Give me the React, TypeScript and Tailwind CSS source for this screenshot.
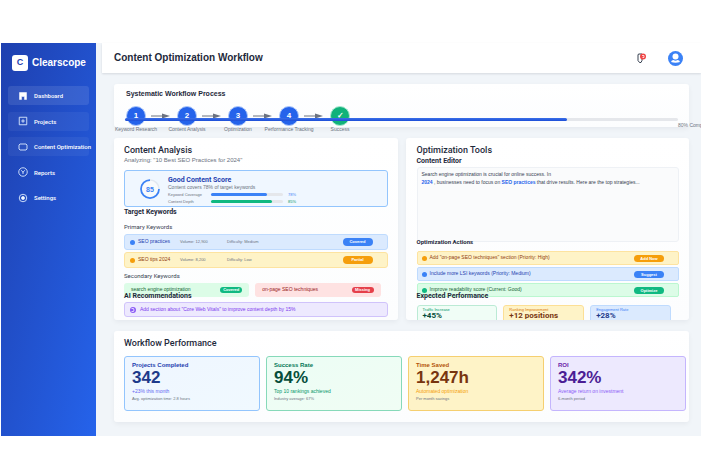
import { ReactNode } from "react";

const navItems = [
  { label: "Dashboard", icon: "home", style: "bg-white/10" },
  { label: "Projects", icon: "plus", style: "bg-white/5" },
  { label: "Content Optimization", icon: "content", style: "bg-white/5" },
  { label: "Reports", icon: "reports", style: "" },
  { label: "Settings", icon: "settings", style: "" },
];

const steps = [
  { mark: "1", label: "Keyword Research" },
  { mark: "2", label: "Content Analysis" },
  { mark: "3", label: "Optimization" },
  { mark: "4", label: "Performance Tracking" },
  { mark: "✓", label: "Success" },
];

const scoreBars = [
  { label: "Keyword Coverage", value: 78, fill: "bg-[#3b82f6]", text: "text-[#3b82f6]" },
  { label: "Content Depth", value: 85, fill: "bg-[#10b981]", text: "text-[#059669]" },
];

const primaryKeywords = [
  {
    name: "SEO practices",
    volume: "Volume: 12,900",
    difficulty: "Difficulty: Medium",
    status: "Covered",
    row: "border-[#bfdbfe] bg-[#dbeafe] text-[#1e40af]",
    color: "bg-[#3b82f6]",
  },
  {
    name: "SEO tips 2024",
    volume: "Volume: 8,200",
    difficulty: "Difficulty: Low",
    status: "Partial",
    row: "border-[#fde3a0] bg-[#fef3c7] text-[#92400e]",
    color: "bg-[#f59e0b]",
  },
];

const actions = [
  {
    text: 'Add "on-page SEO techniques" section (Priority: High)',
    button: "Add Now",
    row: "border-[#fde3a0] bg-[#fef3c7] text-[#92400e]",
    color: "bg-[#f59e0b]",
  },
  {
    text: "Include more LSI keywords (Priority: Medium)",
    button: "Suggest",
    row: "border-[#bfdbfe] bg-[#dbeafe] text-[#1e40af]",
    color: "bg-[#3b82f6]",
  },
  {
    text: "Improve readability score (Current: Good)",
    button: "Optimize",
    row: "border-[#bbf7d0] bg-[#dcfce7] text-[#166534]",
    color: "bg-[#10b981]",
  },
];

const expected = [
  { label: "Traffic Increase", value: "+45%", box: "border-[#bbead5] bg-[#f0fdf6]", labelColor: "text-[#059669]", valueColor: "text-[#064e3b]" },
  { label: "Ranking Improvement", value: "+12 positions", box: "border-[#fcdf95] bg-[#fef3c7]", labelColor: "text-[#d97706]", valueColor: "text-[#78350f]" },
  { label: "Engagement Rate", value: "+28%", box: "border-[#bfdbfe] bg-[#dbeafe]", labelColor: "text-[#3b82f6]", valueColor: "text-[#1e3a8a]" },
];

const stats = [
  {
    label: "Projects Completed",
    value: "342",
    note: "+23% this month",
    detail: "Avg. optimization time: 2.8 hours",
    box: "border-[#93c5fd] bg-linear-to-br from-[#eff6ff] to-[#f0f9ff]",
    labelColor: "text-[#1e40af]",
    valueColor: "text-[#1e3a8a]",
    noteColor: "text-[#6366f1]",
  },
  {
    label: "Success Rate",
    value: "94%",
    note: "Top 10 rankings achieved",
    detail: "Industry average: 67%",
    box: "border-[#86d9b9] bg-linear-to-br from-[#ecfdf5] to-[#f0fdf4]",
    labelColor: "text-[#047857]",
    valueColor: "text-[#064e3b]",
    noteColor: "text-[#059669]",
  },
  {
    label: "Time Saved",
    value: "1,247h",
    note: "Automated optimization",
    detail: "Per month savings",
    box: "border-[#f5cf70] bg-[#fef3c7]",
    labelColor: "text-[#b45309]",
    valueColor: "text-[#78350f]",
    noteColor: "text-[#f59e0b]",
  },
  {
    label: "ROI",
    value: "342%",
    note: "Average return on investment",
    detail: "6-month period",
    box: "border-[#c4b5fd] bg-[#ede9fe]",
    labelColor: "text-[#6b21a8]",
    valueColor: "text-[#4c1d95]",
    noteColor: "text-[#8b5cf6]",
  },
];

const NavIcon = ({ name }: { name: string }) => (
  <svg viewBox="0 0 20 20" className="size-[10px] shrink-0" fill="none" stroke="#dbeafe" strokeWidth="1.8">
    {name === "home" && <path d="M3 3h14v14h-4v-6H7v6H3z" fill="#fff" stroke="#fff" strokeWidth="1" />}
    {name === "plus" && <path d="M2.500 2.500h15v15h-15zM10 6.500v7M6.500 10h7" />}
    {name === "content" && <path d="M4 4h12l2 2v8l-2 2H4l-2-2V6z" />}
    {name === "reports" && (
      <>
        <circle cx="10" cy="10" r="8.500" />
        <path d="M6.500 6.500 10 10.500l3.500-4M10 10v4" />
      </>
    )}
    {name === "settings" && (
      <>
        <circle cx="10" cy="10" r="7.500" />
        <circle cx="10" cy="10" r="3" fill="#fff" />
      </>
    )}
  </svg>
);

const Card = ({ className, children }: { className: string; children: ReactNode }) => (
  <section className={`rounded-[3px] bg-linear-to-b from-white to-[#fcfdfe] shadow-[0_2px_5px_rgba(15,23,42,0.05)] ${className}`}>
    {children}
  </section>
);

const SubHeading = ({ children }: { children: ReactNode }) => (
  <h3 className="relative font-[Roboto] text-[7px] leading-[10px] font-bold text-[#1e293b]">{children}</h3>
);

const Dot = ({ color }: { color: string }) => <span className={`size-[5px] shrink-0 rounded-full ${color}`} />;

const Sidebar = () => (
  <aside className="ml-px w-[95px] shrink-0 bg-linear-to-br from-[#1e40af] to-[#2563eb] px-[7px]">
    <div className="flex h-[39px] items-center gap-1 pl-1">
      <span className="flex size-4 items-center justify-center rounded-[3px] bg-white text-[9px] font-bold text-[#1e40af]">C</span>
      <span className="text-[10px] font-bold text-white">Clearscope</span>
    </div>
    <nav className="mt-1 flex h-[121px] flex-col justify-between font-[Roboto]">
      {navItems.map((item) => (
        <a
          key={item.label}
          href="#"
          className={`flex h-[19px] items-center gap-[6px] rounded-[3px] pl-[10px] text-[6px] font-medium whitespace-nowrap text-white ${item.style}`}
        >
          <NavIcon name={item.icon} />
          {item.label}
        </a>
      ))}
    </nav>
  </aside>
);

const Header = () => (
  <header className="flex h-[30px] items-center justify-between bg-white pr-[18px] pl-3 shadow-[0_1px_2px_rgba(15,23,42,0.12)]">
    <h1 className="text-[10px] leading-3 font-bold text-[#1e293b]">Content Optimization Workflow</h1>
    <div className="flex items-center gap-5">
      <button aria-label="Notifications">
        <svg viewBox="0 0 26 26" className="size-[13px]">
          <path d="M7 4h7v13l-2 4H9l-3-4V6z" fill="#fff" stroke="#374151" strokeWidth="2" />
          <circle cx="16" cy="9" r="6" fill="#ef4444" />
          <path d="M14 7h4v4h-3" fill="none" stroke="#fff" strokeWidth="1.500" />
        </svg>
      </button>
      <button aria-label="Account">
        <svg viewBox="0 0 30 30" className="size-[15px]">
          <circle cx="15" cy="15" r="15" fill="#3b82f6" />
          <circle cx="15" cy="11" r="6" fill="#fff" />
          <path d="M6 22q1-4 5-4 4 3 8 0 4 0 5 4-9 3-18 0z" fill="#fff" />
        </svg>
      </button>
    </div>
  </header>
);

const Workflow = () => (
  <Card className="relative h-[43px] px-3 pt-[5px]">
    <h2 className="text-[7px] leading-[10px] font-bold text-[#1e293b]">Systematic Workflow Process</h2>
    <ol className="mt-[7px] flex">
      {steps.map((step, i) => (
        <li key={step.label} className="flex">
          <div className="flex w-5 flex-col items-center">
            <span
              className={`flex size-5 shrink-0 items-center justify-center rounded-full border text-[8px] leading-5 font-bold text-white ${
                i === 4 ? "border-[#a7e8cf] bg-[#10b27a]" : "border-[#a9c5fb] bg-[#2563eb]"
              }`}
            >
              {step.mark}
            </span>
            <span className="text-[5px] leading-[7px] whitespace-nowrap text-[#6b7280]">{step.label}</span>
          </div>
          {i < 4 && (
            <svg viewBox="0 0 31 20" className="h-5 w-[31px]">
              <path d="M5 10h13" stroke="#6b7280" strokeWidth="1" />
              <path d="M16 7.500l8 2.500-8 2.500z" fill="#6b7280" />
            </svg>
          )}
        </li>
      ))}
    </ol>
    <div className="absolute top-[34px] right-[11px] left-[11px] h-[3px] rounded-full bg-[#e5e7eb]">
      <div className="h-full w-4/5 rounded-full bg-linear-to-b from-[#3b6fe8] to-[#1d4ed8]" />
      <span className="absolute top-1 left-full text-[5px] leading-[7px] whitespace-nowrap text-[#6b7280]">80% Complete</span>
    </div>
  </Card>
);

const ContentAnalysis = () => (
  <Card className="h-[182px] px-[10px] pt-[6px]">
    <h2 className="font-[Roboto] text-[9px] leading-3 font-medium text-[#1e293b]">Content Analysis</h2>
    <p className="text-[6px] leading-2 text-[#6b7280]">Analyzing: "10 Best SEO Practices for 2024"</p>

    <div className="mt-[6px] flex h-[37px] items-center gap-2 rounded-[3px] border border-[#93c5fd] bg-[#f0f7ff] pl-[15px]">
      <svg viewBox="0 0 40 40" className="size-5 shrink-0">
        <circle cx="20" cy="20" r="18" fill="#f8fafc" stroke="#e2e8f0" strokeWidth="3" />
        <path d="M38 20a18 18 0 1 1-18-18" fill="none" stroke="#3b82f6" strokeWidth="3.500" />
        <text x="20" y="25" textAnchor="middle" fontSize="14" fontWeight="700" fill="#3b82f6">85</text>
      </svg>
      <div className="pt-1">
        <h3 className="font-[Roboto] text-[7px] leading-2 font-bold text-[#1e40af]">Good Content Score</h3>
        <p className="text-[5px] leading-[7px] text-[#6b7280]">Content covers 78% of target keywords</p>
        {scoreBars.map((bar) => (
          <div key={bar.label} className="flex h-[7px] items-center text-[4px] leading-[5px] text-[#6b7280]">
            <span className="w-[43px]">{bar.label}</span>
            <span className="h-[3px] w-[72px] rounded-full bg-[#e5e7eb]">
              <span className={`block h-full rounded-full ${bar.fill}`} style={{ width: `${bar.value}%` }} />
            </span>
            <span className={`ml-[5px] ${bar.text}`}>{bar.value}%</span>
          </div>
        ))}
      </div>
    </div>

    <SubHeading>Target Keywords</SubHeading>
    <h4 className="mt-[6px] font-[Roboto] text-[6px] leading-2 text-[#374151]">Primary Keywords</h4>
    <ul className="mt-[3px] flex flex-col gap-[2px]">
      {primaryKeywords.map((k) => (
        <li key={k.name} className={`flex h-4 items-center rounded-[3px] border pr-[14px] pl-[5px] ${k.row}`}>
          <Dot color={k.color} />
          <span className="ml-[3px] w-[42px] text-[5px]">{k.name}</span>
          <span className="w-[47px] text-[4px] text-[#6b7280]">{k.volume}</span>
          <span className="text-[4px] text-[#6b7280]">{k.difficulty}</span>
          <span className={`ml-auto w-[30px] rounded-full text-center text-[4px] leading-2 font-bold text-white ${k.color}`}>
            {k.status}
          </span>
        </li>
      ))}
    </ul>
    <h4 className="mt-1 font-[Roboto] text-[6px] leading-2 text-[#374151]">Secondary Keywords</h4>
    <div className="mt-[3px] flex h-2 gap-[6px] pr-[7px] text-[5px]">
      <div className="flex h-[14px] flex-1 items-center justify-between rounded-[3px] bg-[#dcfce7] px-[7px] text-[#166534]">
        search engine optimization
        <span className="w-[22px] rounded-full bg-[#10b981] text-center text-[4px] leading-[6px] font-bold text-white">Covered</span>
      </div>
      <div className="flex h-[14px] flex-1 items-center justify-between rounded-[3px] bg-[#fee2e2] px-[7px] text-[#991b1b]">
        on-page SEO techniques
        <span className="w-[22px] rounded-full bg-[#e5404a] text-center text-[4px] leading-[6px] font-bold text-white">Missing</span>
      </div>
    </div>
    <SubHeading>AI Recommendations</SubHeading>
    <div className="mt-px flex h-[15px] items-center gap-1 rounded-[3px] border border-[#d0c3fb] bg-[#ede9fe] pl-[5px] text-[5px] text-[#7c3aed]">
      <svg viewBox="0 0 12 12" className="size-[6px] shrink-0">
        <circle cx="6" cy="6" r="6" fill="#8b5cf6" />
        <path d="M3 3h4l1 3-1 3H3" fill="none" stroke="#fff" strokeWidth="1.500" />
      </svg>
      Add section about "Core Web Vitals" to improve content depth by 15%
    </div>
  </Card>
);

const OptimizationTools = () => (
  <Card className="h-[182px] overflow-hidden pt-[6px] pr-[10px] pl-[11px]">
    <h2 className="font-[Roboto] text-[9px] leading-3 font-medium text-[#1e293b]">Optimization Tools</h2>
    <SubHeading>Content Editor</SubHeading>
    <div className="mt-px h-[70px] text-[5px] leading-2 text-[#374151]">
      <div className="h-[75px] rounded-[3px] border border-[#eef1f5] bg-[#fafbfc] px-1 pt-[2px]">
        Search engine optimization is crucial for online success. In
        <br />
        <span className="font-bold text-[#2563eb]">2024</span> , businesses need to focus on{" "}
        <span className="font-bold text-[#2563eb]">SEO practices</span> that drive results. Here are the top strategies...
      </div>
    </div>
    <h3 className="relative font-[Roboto] text-[6px] leading-[10px] font-bold text-[#1e293b]">Optimization Actions</h3>
    <div className="mt-1 flex h-10 flex-col gap-[2px]">
      {actions.map((a) => (
        <div key={a.button} className={`flex h-[14px] shrink-0 items-center rounded-[2px] border pr-[14px] pl-1 text-[5px] ${a.row}`}>
          <Dot color={a.color} />
          <span className="ml-[3px]">{a.text}</span>
          <button className={`ml-auto w-[30px] rounded-full text-center text-[4px] leading-[7px] font-bold text-white ${a.color}`}>
            {a.button}
          </button>
        </div>
      ))}
    </div>
    <SubHeading>Expected Performance</SubHeading>
    <div className="mt-1 grid grid-cols-3 gap-[6px] pr-2">
      {expected.map((e) => (
        <div key={e.label} className={`h-5 rounded-[3px] border px-[5px] pt-px ${e.box}`}>
          <p className={`text-[4px] leading-[5px] ${e.labelColor}`}>{e.label}</p>
          <p className={`font-[Roboto] text-[8px] leading-2 font-bold ${e.valueColor}`}>{e.value}</p>
        </div>
      ))}
    </div>
  </Card>
);

const Performance = () => (
  <Card className="pt-[6px] pr-[3px] pb-[11px] pl-[10px]">
    <h2 className="font-[Roboto] text-[9px] leading-3 font-medium text-[#1e293b]">Workflow Performance</h2>
    <div className="mt-[7px] grid grid-cols-4 gap-[6px]">
      {stats.map((s) => (
        <div key={s.label} className={`h-[55px] rounded-[3px] border px-[7px] pt-[5px] ${s.box}`}>
          <p className={`text-[6px] leading-[7px] font-bold ${s.labelColor}`}>{s.label}</p>
          <p className={`text-[17px] leading-[17px] font-bold ${s.valueColor}`}>{s.value}</p>
          <p className={`mt-px text-[5px] leading-2 ${s.noteColor}`}>{s.note}</p>
          <p className="text-[4px] leading-[7px] text-[#6b7280]">{s.detail}</p>
        </div>
      ))}
    </div>
  </Card>
);

const App = () => {
  return (
    <div className="overflow-hidden bg-white pt-[43px] pb-[27px] font-['Liberation_Sans',sans-serif]">
      <div className="flex">
        <Sidebar />
        <div className="min-w-0 flex-1 bg-[#f1f5f9] pl-[6px]">
          <Header />
          <main className="flex flex-col gap-[11px] pt-[11px] pr-3 pb-[14px] pl-3">
            <Workflow />
            <div className="grid grid-cols-2 gap-2">
              <ContentAnalysis />
              <OptimizationTools />
            </div>
            <Performance />
          </main>
        </div>
      </div>
    </div>
  );
};

export default App;
